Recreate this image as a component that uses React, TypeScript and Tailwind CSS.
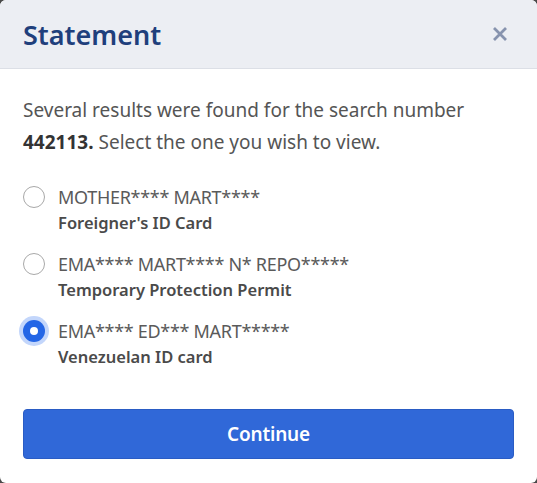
import React, { useState } from "react";

const items = [
  { name: "MOTHER**** MART****", doc: "Foreigner's ID Card" },
  { name: "EMA**** MART**** N* REPO*****", doc: "Temporary Protection Permit" },
  { name: "EMA**** ED*** MART*****", doc: "Venezuelan ID card" },
];

export default function App() {
  const [sel, setSel] = useState(2);
  return (
    <div className="w-[537px] h-[483px] bg-[#4a4a4a]" style={{ fontFamily: '"Noto Sans", "Open Sans", sans-serif' }}>
      <div className="w-full h-full bg-white rounded-[6px] overflow-hidden flex flex-col">
        <div className="h-[69px] shrink-0 bg-[#eceef3] border-b border-[#dcdfe6] flex items-center justify-between pl-[23px] pr-[28px]">
          <h2 className="text-[27px] font-semibold text-[#1f3f7c] leading-none">Statement</h2>
          <svg width="18" height="18" viewBox="0 0 18 18" className="text-[#8793ae]">
            <path d="M3 3 L15 15 M15 3 L3 15" stroke="currentColor" strokeWidth="2.8" strokeLinecap="butt" />
          </svg>
        </div>
        <div className="px-[23px] pt-[25px] flex flex-col">
          <p className="text-[19px] leading-[32px] text-[#555]">
            Several results were found for the search number <b className="font-bold text-[#333]">442113.</b> Select the one you wish to view.
          </p>
          <div className="mt-[26px] flex flex-col gap-[15px]">
            {items.map((it, i) => (
              <label key={i} className="flex items-start gap-[13px] cursor-pointer" onClick={() => setSel(i)}>
                <span className="mt-[2px] w-[22px] h-[22px] shrink-0 flex items-center justify-center">
                  {sel === i ? (
                    <span className="w-[22px] h-[22px] rounded-full bg-[#2466e6] ring-4 ring-[#c3d6fb] flex items-center justify-center">
                      <span className="w-[8px] h-[8px] rounded-full bg-white" />
                    </span>
                  ) : (
                    <span className="w-[22px] h-[22px] rounded-full border border-[#a8a8a8] bg-white" />
                  )}
                </span>
                <span className="flex flex-col">
                  <span className="text-[18px] leading-[26px] text-[#5a5a5a] tracking-[-0.3px]">{it.name}</span>
                  <span className="text-[16.5px] leading-[26px] font-semibold text-[#4a4a4a]">{it.doc}</span>
                </span>
              </label>
            ))}
          </div>
          <button className="mt-[39px] h-[50px] w-full rounded-[4px] bg-[#3068d8] border border-[#2a5cc4] text-white text-[19px] font-semibold tracking-[-0.2px]">
            Continue
          </button>
        </div>
      </div>
    </div>
  );
}
